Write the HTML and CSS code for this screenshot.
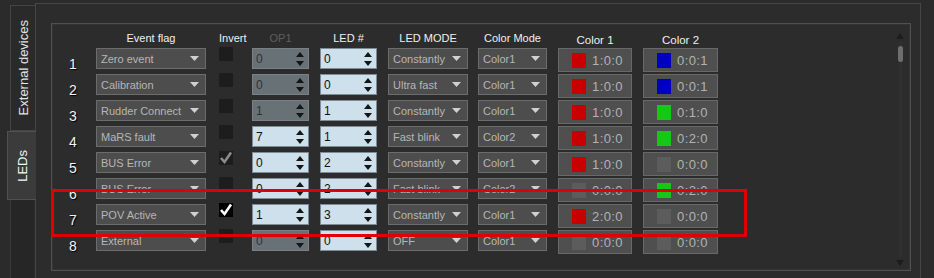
FILE: index.html
```html
<!DOCTYPE html>
<html lang="en">
    <head>
        <meta charset="UTF-8" />
        <title>LEDs</title>
        <link rel="stylesheet" href="styles.css">
    </head>
    <body>
        <div class="window">
            <div class="tabs">
                <div class="tab"><span>External devices</span></div>
                <div class="tab active"><span>LEDs</span></div>
                <div class="tab-rest"></div>
            </div>
            <div class="panel">
                <div class="group">
                    <div class="table" id="table">
                        <div></div>
                        <div class="head w-event">Event flag</div>
                        <div class="head w-check">Invert</div>
                        <div class="head w-spin off">OP1</div>
                        <div class="head w-spin">LED #</div>
                        <div class="head w-mode">LED MODE</div>
                        <div class="head w-cmode">Color Mode</div>
                        <div class="head w-color low">Color 1</div>
                        <div class="head w-color2 low">Color 2</div>
                    </div>
                    <div class="scrollbar">
                        <svg width="8" height="6" viewBox="0 0 8 6"><path d="M4 0 L8 6 L0 6 Z" fill="#1c1c1c"/></svg>
                        <div class="track"><div class="thumb"></div></div>
                        <svg width="8" height="6" viewBox="0 0 8 6"><path d="M0 0 L8 0 L4 6 Z" fill="#1c1c1c"/></svg>
                    </div>
                    <div class="highlight"></div>
                </div>
            </div>
        </div>
        <script>
            // rows: event, invert (0 none, 1 grey, 2 white), op1, op1 enabled, led, mode, colour mode, colour 1, colour 2
            const ROWS = [
                ["Zero event", 0, "0", false, "0", "Constantly", "Color1", "red", "1:0:0", "blue", "0:0:1"],
                ["Calibration", 0, "0", false, "0", "Ultra fast", "Color1", "red", "1:0:0", "blue", "0:0:1"],
                ["Rudder Connect", 0, "1", false, "1", "Constantly", "Color1", "red", "1:0:0", "green", "0:1:0"],
                ["MaRS fault", 0, "7", true, "1", "Fast blink", "Color2", "red", "1:0:0", "green", "0:2:0"],
                ["BUS Error", 1, "0", true, "2", "Constantly", "Color1", "red", "1:0:0", "grey", "0:0:0"],
                ["BUS Error", 0, "0", true, "2", "Fast blink", "Color2", "grey", "0:0:0", "green", "0:2:0"],
                ["POV Active", 2, "1", true, "3", "Constantly", "Color1", "red", "2:0:0", "grey", "0:0:0"],
                ["External", 0, "0", false, "0", "OFF", "Color1", "grey", "0:0:0", "grey", "0:0:0"]
            ];

            const ARROW = '<svg class="arrow" width="9" height="5" viewBox="0 0 9 5"><path d="M0 0 L9 0 L4.5 5 Z" fill="#d0d0d0"/></svg>';
            const SPIN = '<svg class="spin-arrows" width="8" height="14" viewBox="0 0 8 14"><path d="M4 0 L8 5 L0 5 Z M0 9 L8 9 L4 14 Z" fill="#151515"/></svg>';
            const CHECK = '<svg width="14" height="14" viewBox="0 0 14 14"><path d="M2 7 L5.5 11 L12 1.5" fill="none" stroke="currentColor" stroke-width="2.6"/></svg>';

            function combo(text, cls) {
                return `<div class="combo ${cls}"><span>${text}</span>${ARROW}</div>`;
            }

            function spin(value, enabled) {
                return `<div class="spin ${enabled ? "" : "disabled"}"><span>${value}</span>${SPIN}</div>`;
            }

            function colour(name, text, cls) {
                return `<div class="color-btn ${cls}"><i class="swatch ${name}"></i><span>${text}</span></div>`;
            }

            const TABLE = document.querySelector("#table");
            let html = "";
            ROWS.forEach((r, i) => {
                const checkCls = ["", "checked grey", "checked white"][r[1]];
                html += `
                    <div class="num">${i + 1}</div>
                    ${combo(r[0], "w-event")}
                    <div class="check ${checkCls}">${r[1] ? CHECK : ""}</div>
                    ${spin(r[2], r[3])}
                    ${spin(r[4], true)}
                    ${combo(r[5], "w-mode")}
                    ${combo(r[6], "w-cmode")}
                    ${colour(r[7], r[8], "w-color")}
                    ${colour(r[9], r[10], "w-color2")}
                `;
            });
            TABLE.insertAdjacentHTML("beforeend", html);
        </script>
    </body>
</html>
```

FILE: styles.css
```css
* {
    margin: 0;
    padding: 0;
    box-sizing: border-box;
}

body {
    width: 934px;
    height: 278px;
    overflow: hidden;
    background: #2b2b2b;
    color: #e6e6e6;
    font-family: "Liberation Sans", Arial, sans-serif;
    font-size: 11px;
}

.window {
    display: flex;
    padding-top: 3px;
    height: 278px;
}

/* tabs on the left */
.tabs {
    width: 35px;
    display: flex;
    flex-direction: column;
    padding-top: 2px;
    position: relative;
    z-index: 2;
}

.tab {
    margin-left: 10px;
    width: 25px;
    height: 126px;
    border: 1px solid #444;
    border-right: none;
    background: #2a2a2a;
    display: flex;
    align-items: center;
    justify-content: center;
    font-size: 13px;
    color: #e4e4e4;
}

.tab span {
    writing-mode: vertical-rl;
    transform: rotate(180deg);
    white-space: nowrap;
}

.tab.active {
    margin-left: 7px;
    width: 29px;
    height: 69px;
    background: #3b3b3b;
    border-color: #505050;
    color: #f4f4f4;
}

.tab-rest {
    margin-left: 10px;
    width: 24px;
    flex: 1;
    border-left: 1px solid #3a3a3a;
    background: #262626;
}

/* main panel */
.panel {
    width: 886px;
    height: 275px;
    border: 1px solid #464646;
    border-bottom: none;
    padding: 19px 0 0 15px;
    background: #2c2c2c;
}

.group {
    position: relative;
    width: 860px;
    height: 248px;
    border: 1px solid #505050;
    box-shadow: inset 0 0 0 1px #343434;
    display: flex;
    padding: 6px 0 0 10px;
}

.table {
    display: grid;
    grid-template-columns: 34px 123px 33px 68px 68px 90px 80px 85px 75px;
    grid-auto-rows: 26px;
    grid-template-rows: 18px;
    align-items: start;
}

.head {
    text-align: center;
    line-height: 16px;
    color: #f0f0f0;
}

.head.off {
    color: #5e5e5e;
}

.head.low {
    padding-top: 2px;
    font-size: 11.5px;
}

.w-event { width: 110px; }
.w-check { width: 18px; }
.w-spin { width: 57px; }
.w-mode { width: 80px; }
.w-cmode { width: 69px; }
.w-color { width: 74px; }
.w-color2 { width: 75px; }

.num {
    text-align: center;
    width: 22px;
    font-size: 14px;
    line-height: 16px;
    padding-top: 8px;
    height: 26px;
    color: #f2f2f2;
    text-shadow: 1px 1px 1px #000;
}

.combo {
    height: 21px;
    background: #4d4d4d;
    border: 1px solid #6c6c6c;
    color: #b6b6b6;
    display: flex;
    align-items: center;
    justify-content: space-between;
    padding: 0 6px 0 4px;
    white-space: nowrap;
}

.spin {
    width: 57px;
    height: 21px;
    background: #cde0eb;
    border: 1px solid #7d8c96;
    color: #111;
    font-size: 12px;
    display: flex;
    align-items: center;
    justify-content: space-between;
    padding: 0 4px 0 3px;
}

.spin.disabled {
    background: #687176;
    border-color: #7a8186;
    color: #2e3336;
}

.check {
    width: 14px;
    height: 14px;
    margin-top: -1px;
    background: #1d1d1d;
    color: #8c8c8c;
}

.check svg {
    display: block;
}

.check.white {
    background: #000;
    color: #fff;
}

.color-btn {
    height: 24px;
    background: #4f4f4f;
    border: 1px solid #686868;
    display: flex;
    align-items: center;
    padding-left: 13px;
    gap: 6px;
    color: #b2b2b2;
    font-size: 13px;
    letter-spacing: 0.4px;
}

.swatch {
    width: 14px;
    height: 15px;
    background: #5c5c5c;
}

.swatch.red { background: #c80000; }
.swatch.blue { background: #0000c2; }
.swatch.green { background: #16c816; }

/* scrollbar */
.scrollbar {
    margin-left: auto;
    margin-right: 6px;
    width: 8px;
    display: flex;
    flex-direction: column;
    align-items: center;
    padding-top: 3px;
    height: 236px;
}

.scrollbar .track {
    flex: 1;
    width: 3px;
    margin: 3px 0;
    background: #303030;
}

.scrollbar .thumb {
    width: 5px;
    height: 16px;
    margin: 4px 0 0 -1px;
    border-radius: 3px;
    background: #6e6e6e;
}

/* red marker drawn over the rows */
.highlight {
    position: absolute;
    left: -1px;
    top: 165px;
    width: 696px;
    height: 48px;
    border: 3px solid #e00000;
}
```
